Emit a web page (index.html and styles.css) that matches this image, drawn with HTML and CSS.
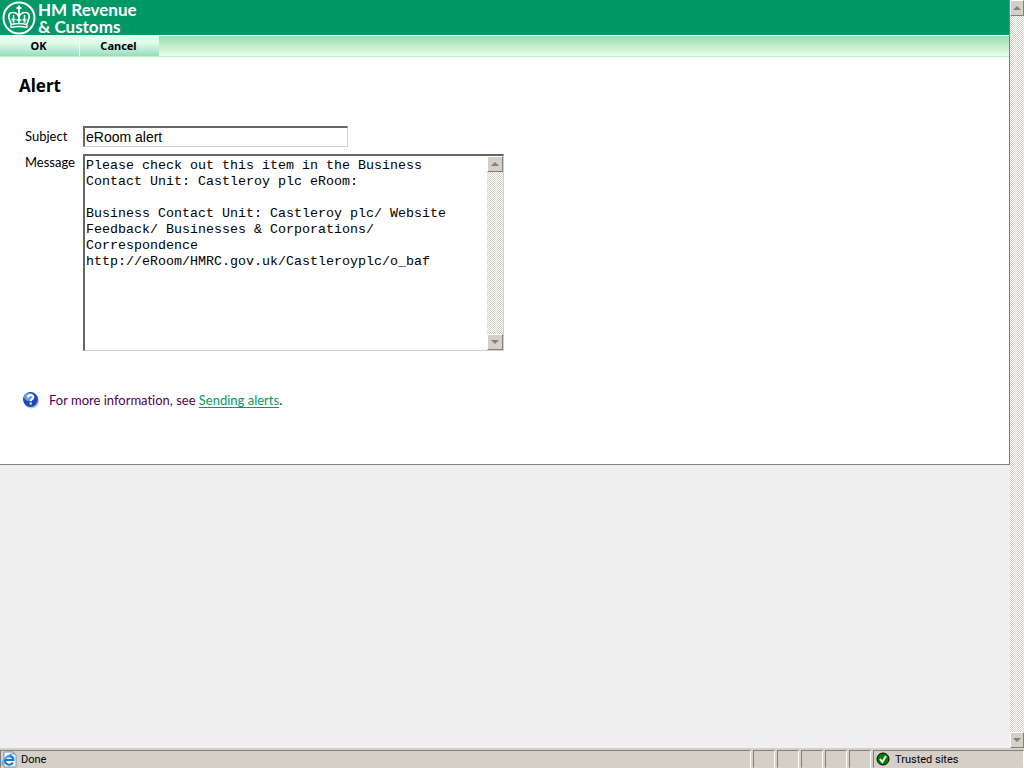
FILE: index.html
```html
<!DOCTYPE html>
<html lang="en">
<head>
  <meta charset="UTF-8" />
  <meta name="viewport" content="width=device-width, initial-scale=1.0" />
  <title>Alert - HM Revenue &amp; Customs</title>
  <link rel="stylesheet" href="styles.css">
</head>
<body>

  <div class="window">
    <main class="page">
      <div class="panel">

        <!-- Header -->
        <header class="banner">
          <svg class="crest" viewBox="0 0 34 34" width="34" height="34" fill="none" stroke="#fff" aria-hidden="true">
            <circle cx="17" cy="17" r="15.5" stroke-width="2" />
            <path d="M9 26.500Q17 24.500 25 26.500M9 23.500Q17 21.500 25 23.500M9 23V27M25 23V27" stroke-width="1.300" />
            <path d="M9 23L7 17Q6 11.500 10.500 11.500Q15.500 11.500 17 16Q18.500 11.500 23.500 11.500Q28 11.500 27 17L25 23" stroke-width="1.700" />
            <path d="M17 10V22M11.500 14V18M22.500 14V18M9.500 18.500H13.500M20.500 18.500H24.500M14.500 19H19.500" stroke-width="1.500" />
            <path d="M11.500 18V21.500M22.500 18V21.500" stroke-width="2" />
            <path d="M17 4.500V11M14.500 7H19.500" stroke-width="2" />
          </svg>
          <div class="brand">HM Revenue<br>&amp; Customs</div>
        </header>

        <!-- Toolbar -->
        <div class="toolbar">
          <button type="submit" form="alert-form">OK</button>
          <button type="button">Cancel</button>
        </div>

        <!-- Alert form -->
        <form class="alert-form" id="alert-form">
          <h1>Alert</h1>
          <div class="fields">
            <label class="middle" for="subject">Subject</label>
            <input type="text" id="subject" value="eRoom alert">
            <label for="message">Message</label>
            <div class="message-box">
              <textarea id="message">Please check out this item in the Business
Contact Unit: Castleroy plc eRoom:

Business Contact Unit: Castleroy plc/ Website
Feedback/ Businesses &amp; Corporations/
Correspondence
http://eRoom/HMRC.gov.uk/Castleroyplc/o_baf</textarea>
              <div class="scrollbar" aria-hidden="true">
                <span class="arrow up"></span>
                <span class="arrow down"></span>
              </div>
            </div>
          </div>
          <p class="help">
            <svg viewBox="0 0 18 18" width="18" height="18" aria-hidden="true">
              <circle cx="9.500" cy="10" r="7.500" fill="#c4c4c4" />
              <circle cx="8.500" cy="8.500" r="7.500" fill="#1c49b8" />
              <ellipse cx="7" cy="6" rx="5" ry="4" fill="#6f9bea" />
              <path d="M5.800 6.500Q6 4 8.700 4Q11.400 4.100 11.300 6.300Q11.200 7.600 9.700 8.300Q8.700 8.900 8.700 10.300M8.700 11.500V13.500" fill="none" stroke="#fff" stroke-width="2.100" />
            </svg>
            <span>For more information, see <a href="#">Sending alerts</a>.</span>
          </p>
        </form>
      </div>
    </main>

    <div class="scrollbar" aria-hidden="true">
      <span class="arrow up"></span>
      <span class="arrow down"></span>
    </div>
  </div>

  <!-- Status bar -->
  <footer class="status">
    <div class="cell grow">
      <svg viewBox="0 0 17 17" width="17" height="17" aria-hidden="true">
        <path d="M3 1H12L15 4V16H3Z" fill="#fff" stroke="#7d8fa8" />
        <path d="M12 7.500A4.300 4.300 0 1 0 12 11.500M4 9H12.500Q12.500 5 8.300 5" fill="none" stroke="#1f78cf" stroke-width="2" />
        <path d="M1.500 14Q0 11 6 5.500Q12 1 14.500 3.500" fill="none" stroke="#59b0ed" stroke-width="1.300" />
      </svg>
      Done
    </div>
    <div class="cell"></div>
    <div class="cell"></div>
    <div class="cell"></div>
    <div class="cell"></div>
    <div class="cell"></div>
    <div class="cell zone">
      <svg viewBox="0 0 14 14" width="14" height="14" aria-hidden="true">
        <circle cx="7" cy="7" r="6" fill="#008000" stroke="#000" />
        <path d="M4 7L6.300 10L10 4" fill="none" stroke="#fff" stroke-width="2" />
      </svg>
      Trusted sites
    </div>
  </footer>

</body>
</html>
```

FILE: styles.css
```css
* {
  margin: 0;
  padding: 0;
  box-sizing: border-box;
}

body {
  display: flex;
  flex-direction: column;
  height: 100vh;
  overflow: hidden;
  background: #d4d0c8;
  color: #000;
  font-family: Lato, sans-serif;
  font-size: 13px;
  font-variant-ligatures: none;
}

.window {
  flex: 1;
  display: flex;
  min-height: 0;
}

.page {
  flex: 1;
  overflow: hidden;
  background: #efefef;
}

.panel {
  background: #fff;
  border: solid #808080;
  border-width: 0 1px 1px 0;
}

/* ========== Header ========== */
.banner {
  display: flex;
  align-items: center;
  gap: 2px;
  height: 35px;
  padding-left: 2px;
  background: #009966;
}

.brand {
  color: #fff;
  font-size: 17px;
  font-weight: bold;
  line-height: 17px;
}

/* ========== Toolbar ========== */
.toolbar {
  display: flex;
  height: 22px;
  border-top: 1px solid #fff;
  border-bottom: 1px solid #b8f0c0;
  background: linear-gradient(#a0d8ac, #e8ffec);
}

.toolbar button {
  width: 79px;
  padding: 0 2px 2px 0;
  border: 0;
  background: linear-gradient(#e4fdea 30%, #98dcc0);
  font-family: "Noto Sans", sans-serif;
  font-size: 11px;
  font-weight: bold;
}

.toolbar button + button {
  width: 80px;
  border-left: 1px solid #fff;
}

/* ========== Alert form ========== */
.alert-form {
  padding: 16px 19px 55px;
}

h1 {
  font-family: "Noto Sans", sans-serif;
  font-size: 17px;
  line-height: 26px;
}

.fields {
  display: grid;
  grid-template-columns: 58px 1fr;
  row-gap: 7px;
  margin-top: 27px;
  padding-left: 6px;
}

.fields label {
  line-height: 17px;
}

.fields .middle {
  align-self: center;
}

.fields input,
.message-box {
  border: solid;
  border-width: 2px 1px 1px 2px;
  border-color: #666 #d4d0c8 #d4d0c8 #666;
  background: #fff;
}

.fields input {
  width: 265px;
  height: 21px;
  padding: 0 1px;
  font-family: "Liberation Sans", sans-serif;
  font-size: 14px;
}

.message-box {
  display: flex;
  width: 421px;
  height: 197px;
}

.message-box textarea {
  flex: 1;
  padding: 2px 1px;
  border: 0;
  overflow: hidden;
  resize: none;
  font-family: "Liberation Mono", monospace;
  line-height: 16px;
}

.help {
  display: flex;
  align-items: center;
  gap: 9px;
  margin-top: 40px;
  padding-left: 3px;
  color: #550055;
}

.help a {
  color: #009966;
  text-decoration-skip-ink: none;
  text-underline-offset: 2px;
}

/* ========== Scrollbars ========== */
.scrollbar {
  display: flex;
  flex-direction: column;
  justify-content: space-between;
  width: 16px;
  background: repeating-conic-gradient(#d4d0c8 0 25%, #fff 0 50%) 0 0 / 2px 2px;
}

.window > .scrollbar {
  width: 14px;
}

.arrow {
  display: flex;
  align-items: center;
  justify-content: center;
  height: 16px;
  border: 1px solid;
  border-color: #fff #808080 #808080 #fff;
  background: #d4d0c8;
}

.arrow::before {
  content: "";
  border: 4px solid transparent;
  border-top-width: 0;
  border-bottom-color: #808080;
}

.arrow.down::before {
  border-width: 4px 4px 0;
  border-top-color: #808080;
}

/* ========== Status bar ========== */
.status {
  display: flex;
  gap: 2px;
  height: 20px;
  padding-top: 2px;
  font-family: Roboto, sans-serif;
  font-size: 11px;
}

.cell {
  display: flex;
  align-items: center;
  gap: 3px;
  width: 22px;
  border: 1px solid;
  border-color: #808080 #fff #d4d0c8 #808080;
}

.cell.grow {
  flex: 1;
}

.cell.zone {
  width: 151px;
  padding-left: 2px;
  gap: 5px;
}
```
